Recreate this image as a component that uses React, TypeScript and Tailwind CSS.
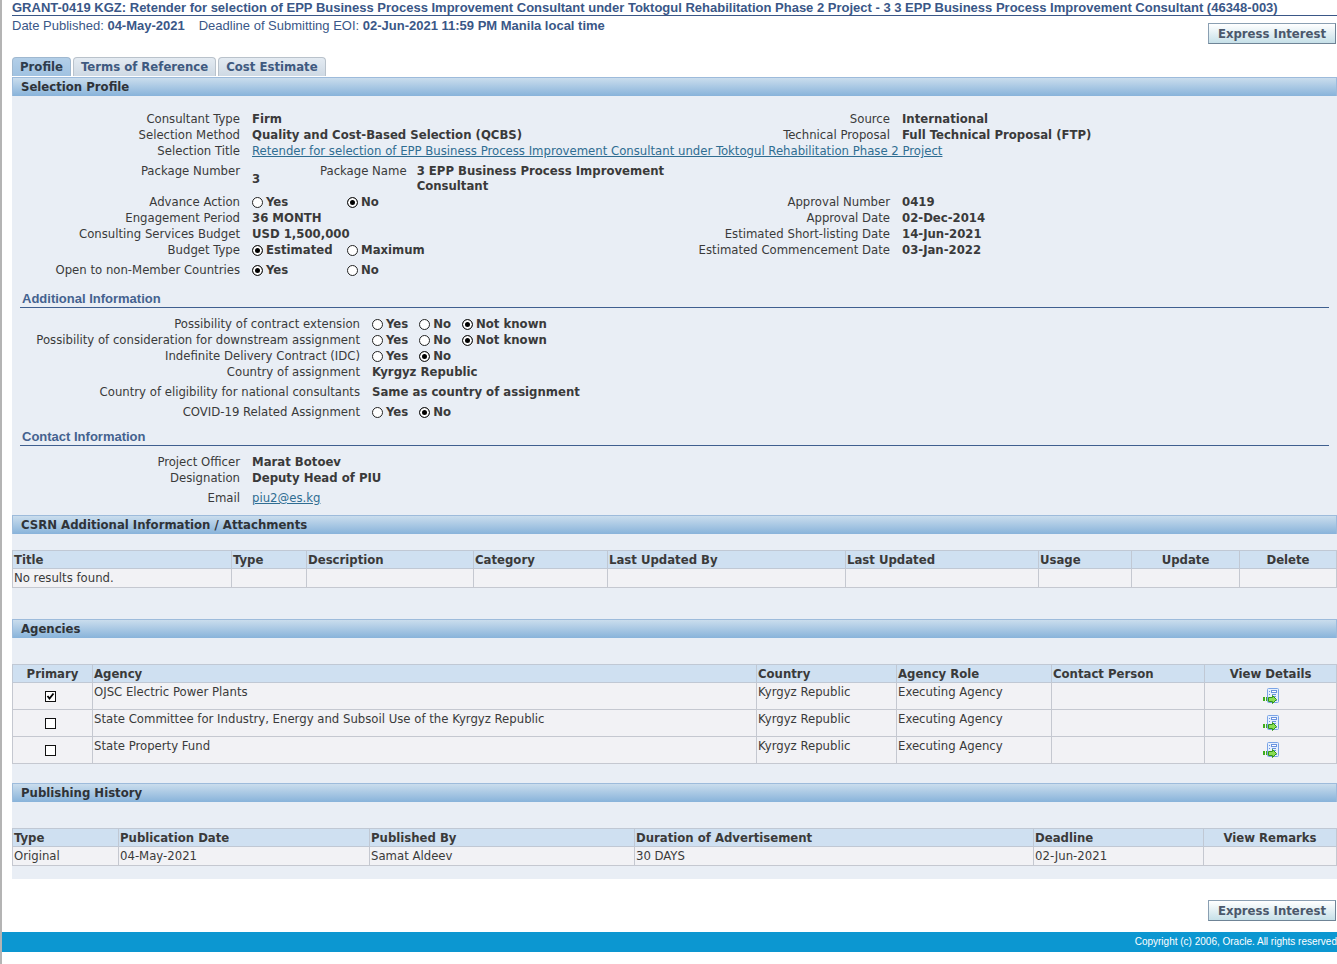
import type { ReactNode } from "react";
import clsx from "clsx";

const tabs = ["Profile", "Terms of Reference", "Cost Estimate"];

const agencies = [
  { name: "OJSC Electric Power Plants", primary: true },
  { name: "State Committee for Industry, Energy and Subsoil Use of the Kyrgyz Republic", primary: false },
  { name: "State Property Fund", primary: false },
];

const attachmentColumns = [
  { title: "Title", width: "w-[219px]" },
  { title: "Type", width: "w-[75px]" },
  { title: "Description", width: "w-[167px]" },
  { title: "Category", width: "w-[134px]" },
  { title: "Last Updated By", width: "w-[238px]" },
  { title: "Last Updated", width: "w-[193px]" },
  { title: "Usage", width: "w-[93px]" },
  { title: "Update", width: "w-[108px]", center: true },
  { title: "Delete", width: "w-[97px]", center: true },
];

const agencyColumns = [
  { title: "Primary", width: "w-[80px]", center: true },
  { title: "Agency", width: "w-[664px]" },
  { title: "Country", width: "w-[140px]" },
  { title: "Agency Role", width: "w-[155px]" },
  { title: "Contact Person", width: "w-[153px]" },
  { title: "View Details", width: "w-[132px]", center: true },
];

const historyColumns = [
  { title: "Type", width: "w-[106px]" },
  { title: "Publication Date", width: "w-[251px]" },
  { title: "Published By", width: "w-[265px]" },
  { title: "Duration of Advertisement", width: "w-[399px]" },
  { title: "Deadline", width: "w-[170px]" },
  { title: "View Remarks", width: "w-[133px]", center: true },
];

function ExpressButton() {
  return (
    <button className="h-[21px] px-[9px] border border-[#8a9fb2] border-b-[#6f8496] border-r-[#6f8496] bg-linear-to-b from-white to-[#c6e0e8] font-bold text-[#4b586b] whitespace-nowrap">
      Express Interest
    </button>
  );
}

function SectionBar({ children }: { children: ReactNode }) {
  return (
    <h2 className="h-[19px] pl-2 leading-[18px] border border-b-0 border-[#9dbbdb] bg-linear-to-b from-[#cadded] to-[#88b3da] font-bold text-[#2f3338]">
      {children}
    </h2>
  );
}

function SubHeading({ children }: { children: ReactNode }) {
  return (
    <h3 className="mx-2 pl-0.5 border-b border-[#3f5f8f] font-['Liberation_Sans',sans-serif] font-bold text-[#44628f]">
      {children}
    </h3>
  );
}

/* Two label/value pairs side by side */
function Row({ label, children, label2, value2 }: { label: string; children: ReactNode; label2?: string; value2?: string }) {
  return (
    <div className="grid grid-cols-[minmax(0,228fr)_minmax(0,426fr)_minmax(0,200fr)_minmax(0,435fr)] gap-x-3">
      <span className="text-right whitespace-nowrap">{label}</span>
      <div className="font-bold whitespace-nowrap">{children}</div>
      <span className="text-right whitespace-nowrap">{label2}</span>
      <span className="font-bold whitespace-nowrap">{value2}</span>
    </div>
  );
}

function WideRow({ label, children }: { label: string; children: ReactNode }) {
  return (
    <div className="grid grid-cols-[minmax(0,348fr)_minmax(0,965fr)] gap-x-3">
      <span className="text-right whitespace-nowrap">{label}</span>
      <div className="font-bold whitespace-nowrap">{children}</div>
    </div>
  );
}

function Radios({ name, options, selected, wide }: { name: string; options: string[]; selected: string; wide?: boolean }) {
  return (
    <div role="radiogroup" aria-label={name} className={clsx("flex", !wide && "gap-[11px]")}>
      {options.map((option) => (
        <label key={option} className={clsx("flex items-center gap-[3px]", wide && "w-[95px]")}>
          <input
            type="radio"
            name={name}
            defaultChecked={option === selected}
            className="appearance-none size-[11px] shrink-0 rounded-full border border-[#222] bg-white checked:bg-black checked:shadow-[inset_0_0_0_2px_white]"
          />
          {option}
        </label>
      ))}
    </div>
  );
}

function DataTable({ columns, children }: { columns: { title: string; width: string; center?: boolean }[]; children: ReactNode }) {
  return (
    <table className="w-full table-fixed border-collapse [&_td]:border [&_td]:border-[#c5c8d0] [&_td]:bg-[#f2f2f5] [&_td]:px-px [&_td]:py-0">
      <thead>
        <tr className="h-[18px]">
          {columns.map((col) => (
            <th
              key={col.title}
              className={clsx("border border-[#c0c8d4] bg-[#cfe0f1] px-px py-0 font-bold whitespace-nowrap", col.width, col.center ? "text-center" : "text-left")}
            >
              {col.title}
            </th>
          ))}
        </tr>
      </thead>
      <tbody>{children}</tbody>
    </table>
  );
}

function DetailsIcon() {
  return (
    <svg width="16" height="16" viewBox="0 0 16 16" aria-hidden="true">
      <rect x="4.5" y="0.5" width="11" height="14" rx="1" fill="#e6f0fd" stroke="#7ba4e6" />
      <rect x="8.5" y="2.5" width="5" height="2" fill="#fff" stroke="#6b93df" />
      <path d="M6 3.5h1M6 6.5h1M9 6.5h4M11 8.5h2M12 12.5h2" stroke="#6b93df" />
      <path d="M0 9h2v4H0zM3 9h1v4H3z" fill="#3fae1d" />
      <path d="M5.5 9.5h4V7.5l4 4-4 4v-2h-4z" fill="#8ade55" stroke="#2f9417" />
    </svg>
  );
}

export default function App() {
  return (
    <div className="min-h-screen overflow-hidden border-l-2 border-[#b4b4b4] bg-white font-['DejaVu_Sans_Condensed','Noto_Sans',sans-serif] text-[13px] leading-4 text-[#3a3a3a]">
      <div className="pl-2.5">
        {/* Title */}
        <header className="font-['Liberation_Sans',sans-serif] text-[#3a5787]">
          <h1 className="h-4 leading-[15px] border-b border-[#3a5787] font-bold whitespace-nowrap">
            GRANT-0419 KGZ: Retender for selection of EPP Business Process Improvement Consultant under Toktogul Rehabilitation Phase 2 Project - 3 3 EPP Business Process Improvement Consultant (46348-003)
          </h1>
        </header>
        <div className="flex justify-between h-[41px] pr-px">
          <p className="flex gap-[14px] pt-[2px] font-['Liberation_Sans',sans-serif] text-[#3a5787]">
            <span>Date Published: <b>04-May-2021</b></span>
            <span>Deadline of Submitting EOI: <b>02-Jun-2021 11:59 PM Manila local time</b></span>
          </p>
          <div className="pt-[7px]">
            <ExpressButton />
          </div>
        </div>

        {/* Tabs */}
        <nav className="flex gap-0.5 pb-px">
          {tabs.map((tab, i) => (
            <a
              key={tab}
              href="#"
              className={clsx(
                "h-[19px] px-[7px] leading-[18px] border border-b-0 rounded-t-[4px] font-bold whitespace-nowrap bg-linear-to-b",
                i === 0 ? "border-[#9fb8d0] from-[#b3cfe8] to-[#a0c2e1] text-[#2f3d4d]" : "border-[#b9c2cb] from-[#e4ebf2] to-[#ced9e4] text-[#3f5a80]"
              )}
            >
              {tab}
            </a>
          ))}
        </nav>

        <main className="bg-[#e9eef5] pb-[13px]">
          <SectionBar>Selection Profile</SectionBar>
          <div className="pt-[15px]">
            <Row label="Consultant Type" label2="Source" value2="International">Firm</Row>
            <Row label="Selection Method" label2="Technical Proposal" value2="Full Technical Proposal (FTP)">Quality and Cost-Based Selection (QCBS)</Row>
            <Row label="Selection Title">
              <a href="#" className="font-normal text-[#2f6d92] underline">
                Retender for selection of EPP Business Process Improvement Consultant under Toktogul Rehabilitation Phase 2 Project
              </a>
            </Row>
            <div className="mt-1 mb-px leading-[15px]">
              <Row label="Package Number">
                <div className="flex gap-2.5">
                  <span className="w-[58px] self-center">3</span>
                  <span className="font-normal">Package Name</span>
                  <span>3 EPP Business Process Improvement<br />Consultant</span>
                </div>
              </Row>
            </div>
            <Row label="Advance Action" label2="Approval Number" value2="0419">
              <Radios name="Advance Action" options={["Yes", "No"]} selected="No" wide />
            </Row>
            <Row label="Engagement Period" label2="Approval Date" value2="02-Dec-2014">36 MONTH</Row>
            <Row label="Consulting Services Budget" label2="Estimated Short-listing Date" value2="14-Jun-2021">USD 1,500,000</Row>
            <Row label="Budget Type" label2="Estimated Commencement Date" value2="03-Jan-2022">
              <Radios name="Budget Type" options={["Estimated", "Maximum"]} selected="Estimated" wide />
            </Row>
            <div className="mt-1">
              <Row label="Open to non-Member Countries">
                <Radios name="Open to non-Member Countries" options={["Yes", "No"]} selected="Yes" wide />
              </Row>
            </div>
          </div>

          <div className="mt-[13px]">
            <SubHeading>Additional Information</SubHeading>
            <div className="pt-2">
              <WideRow label="Possibility of contract extension">
                <Radios name="Possibility of contract extension" options={["Yes", "No", "Not known"]} selected="Not known" />
              </WideRow>
              <WideRow label="Possibility of consideration for downstream assignment">
                <Radios name="Possibility of consideration for downstream assignment" options={["Yes", "No", "Not known"]} selected="Not known" />
              </WideRow>
              <WideRow label="Indefinite Delivery Contract (IDC)">
                <Radios name="Indefinite Delivery Contract (IDC)" options={["Yes", "No"]} selected="No" />
              </WideRow>
              <WideRow label="Country of assignment">Kyrgyz Republic</WideRow>
              <div className="mt-1 space-y-1">
                <WideRow label="Country of eligibility for national consultants">Same as country of assignment</WideRow>
                <WideRow label="COVID-19 Related Assignment">
                  <Radios name="COVID-19 Related Assignment" options={["Yes", "No"]} selected="No" />
                </WideRow>
              </div>
            </div>
          </div>

          <div className="mt-[9px] pb-[9px]">
            <SubHeading>Contact Information</SubHeading>
            <div className="pt-2">
              <Row label="Project Officer">Marat Botoev</Row>
              <Row label="Designation">Deputy Head of PIU</Row>
              <div className="mt-1">
                <Row label="Email">
                  <a href="mailto:piu2@es.kg" className="font-normal text-[#2f6d92] underline">piu2@es.kg</a>
                </Row>
              </div>
            </div>
          </div>

          <SectionBar>CSRN Additional Information / Attachments</SectionBar>
          <div className="pt-4 pr-px pb-[31px]">
            <DataTable columns={attachmentColumns}>
              <tr className="h-[19px]">
                <td>No results found.</td>
                {attachmentColumns.slice(1).map((col) => (
                  <td key={col.title} />
                ))}
              </tr>
            </DataTable>
          </div>

          <SectionBar>Agencies</SectionBar>
          <div className="pt-[26px] pr-px pb-[19px]">
            <DataTable columns={agencyColumns}>
              {agencies.map((agency) => (
                <tr key={agency.name} className="h-[27px] align-top">
                  <td className="align-middle">
                    <label className="relative block pr-1">
                      <input
                        type="checkbox"
                        aria-label={`${agency.name} is primary`}
                        defaultChecked={agency.primary}
                        className="peer sr-only"
                      />
                      <svg width="11" height="11" viewBox="0 0 11 11" className="mx-auto [&_path]:opacity-0 peer-checked:[&_path]:opacity-100" aria-hidden="true">
                        <rect x="0.5" y="0.5" width="10" height="10" fill="#fff" stroke="#111" />
                        <path d="M2.5 5l2 2.5 4-5" fill="none" stroke="#000" strokeWidth="1.8" />
                      </svg>
                    </label>
                  </td>
                  <td className="leading-[18px]">{agency.name}</td>
                  <td className="leading-[18px]">Kyrgyz Republic</td>
                  <td className="leading-[18px]">Executing Agency</td>
                  <td />
                  <td className="align-middle">
                    <a href="#" aria-label={`View details of ${agency.name}`} className="flex justify-center">
                      <DetailsIcon />
                    </a>
                  </td>
                </tr>
              ))}
            </DataTable>
          </div>

          <SectionBar>Publishing History</SectionBar>
          <div className="pt-[26px] pr-px">
            <DataTable columns={historyColumns}>
              <tr className="h-[19px]">
                <td>Original</td>
                <td>04-May-2021</td>
                <td>Samat Aldeev</td>
                <td>30 DAYS</td>
                <td>02-Jun-2021</td>
                <td />
              </tr>
            </DataTable>
          </div>
        </main>

        <div className="flex justify-end pt-[21px] pb-[11px] pr-px">
          <ExpressButton />
        </div>
      </div>

      <footer className="flex justify-end h-5 bg-[#0c97d1] font-['Liberation_Sans',sans-serif] text-[10px] leading-5 text-white">
        <span className="whitespace-nowrap">Copyright (c) 2006, Oracle. All rights reserved</span>
      </footer>
    </div>
  );
}
